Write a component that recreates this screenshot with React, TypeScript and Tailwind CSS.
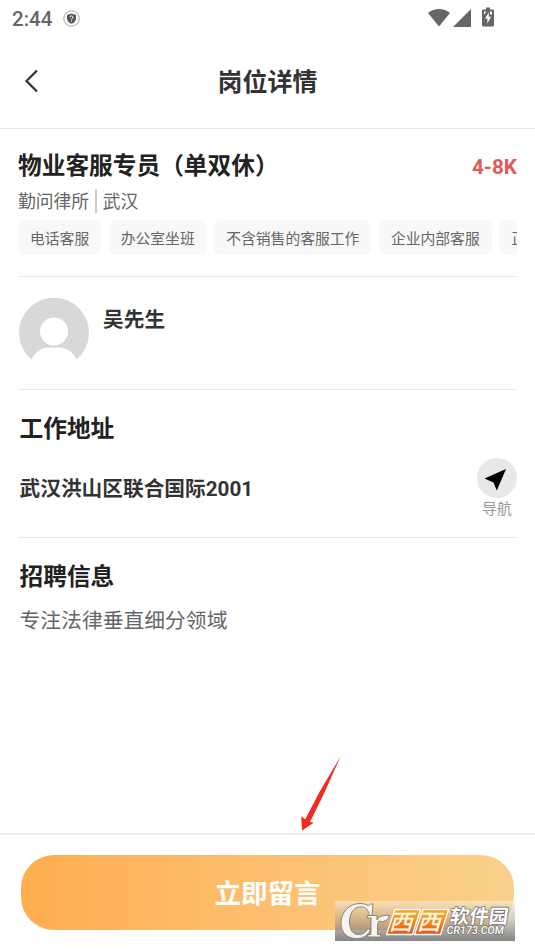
/**
 * JobDetailPage 组件
 * 岗位详情页 - 展示岗位信息、联系人、工作地址
 */

import React, { useState } from 'react';

const job = {
  title: '物业客服专员（单双休）',
  salary: '4-8K',
  company: '勤问律所',
  city: '武汉',
  tags: ['电话客服', '办公室坐班', '不含销售的客服工作', '企业内部客服', '正规公司'],
  contact: '吴先生',
  address: '武汉洪山区联合国际2001',
  description: '专注法律垂直细分领域',
};

// 系统状态栏
const StatusBar: React.FC = () => (
  <div className="flex h-[37px] items-center px-3 text-[#666]">
    <span className="pt-px text-[20.5px] font-medium leading-none">2:44</span>
    <svg className="ml-[11px] h-[17px] w-[17px]" viewBox="0 0 17 17" fill="none">
      <circle cx="8.5" cy="8.5" r="7.7" stroke="#888" strokeWidth="0.8" />
      <path d="M8.5 3.600 13 5v3.400c0 2.500-1.900 4.200-4.500 5.400C5.900 12.600 4 10.900 4 8.400V5z" fill="#555" />
      <path d="M7 7.300c0-2 3-2 3 0 0 1.100-1.500 1.100-1.500 2.500m0 .9v1" stroke="#fff" strokeWidth="1" />
    </svg>
    <svg className="ml-auto h-[19px] w-[22px]" viewBox="0 0 22 19" fill="currentColor">
      <path d="M0 4C6.200-1.200 15.800-1.200 22 4L11 17.500z" />
    </svg>
    <svg className="ml-[3px] h-[19px] w-[18px]" viewBox="0 0 18 19" fill="currentColor">
      <path d="M18 0v18H0z" />
    </svg>
    <svg className="mb-[3px] ml-[11px] mr-[29px] h-[20px] w-[12px]" viewBox="0 0 12 20" fill="currentColor">
      <path d="M4 .5h4v2h2.800c.7 0 1.200.5 1.200 1.200v14.600c0 .7-.5 1.200-1.200 1.200H1.200C.5 19.500 0 19 0 18.300V3.700c0-.7.5-1.200 1.200-1.200H4z" />
      <path d="M6.700 5.500 3 11.500h2.400v5L9 9.800H6.700z" fill="#fff" />
      <path d="M2 4.500h2.600L2 7.500zM10 4.500H7.800v3H10z" fill="#fff" />
    </svg>
  </div>
);

// 默认头像
const Avatar: React.FC = () => (
  <svg className="h-[70px] w-[70px] shrink-0" viewBox="0 0 70 70">
    <path d="M12.500 61.500A35 35 0 1 1 57.500 61.500C54 53.500 46.500 49.500 40 49.500H30C23.500 49.500 16 53.500 12.500 61.500Z" fill="#d8d8d8" />
    <circle cx="35" cy="33.500" r="14" fill="#fff" />
  </svg>
);

// 右下角站点水印
const SiteMark: React.FC = () => (
  <div className="absolute bottom-[10px] left-[335px] h-10 w-[180px] bg-linear-to-b from-[#fbeedb]/60 via-[#a89c8c]/55 to-[#777]/90">
    <svg className="block h-10 w-[180px]" viewBox="0 0 180 40">
      <defs>
        <linearGradient id="markOrange" x1="0" y1="0" x2="0" y2="1">
          <stop offset="0.200" stopColor="#f8a51b" />
          <stop offset="1" stopColor="#e3541d" />
        </linearGradient>
      </defs>
      <g fill="#f4f4f4" stroke="#8b7963" strokeWidth="0.900" strokeLinejoin="round">
        <path d="M38 3 37 14.500h-2.500C33.500 8.500 30 5.800 26 5.800 19 5.800 14.500 12 14.500 21c0 8 3.500 12.500 9 12.500 4.500 0 7.500-2.300 9.500-6l2.500 1.500C32.500 35 27.500 37.500 21.500 37.500 12 37.500 6 31.500 6 22 6 11 14.500 2.500 25 2.500c4 0 6.500 1 8.500 2.300L35.500 3z" />
        <path d="M32.500 14.500h9.500v4.500c2-3.500 5-5 12.500-4.500-1.500 5-6 7-10 5.500-1.500 1-2 2.500-2 5V33.500h3V36H33V33.500h3V17h-3.500z" />
      </g>
      <g fill="url(#markOrange)" stroke="#fff" strokeWidth="1.300" strokeLinejoin="round">
        <path d="M60 8.500h25.500l-8 25H51.500z" />
        <path d="M88 8.500h25.500l-8 25H79.500z" />
      </g>
      <g className="font-medium" fill="#fff8e8" fontSize="22" transform="skewX(-17)">
        <text x="62.500" y="29.500" textLength="24" lengthAdjust="spacingAndGlyphs">西</text>
        <text x="90.500" y="29.500" textLength="24" lengthAdjust="spacingAndGlyphs">西</text>
      </g>
      <g fill="#fff" stroke="#777" strokeLinejoin="round" paintOrder="stroke">
        <text className="font-bold" x="117.500" y="22.500" fontSize="19" strokeWidth="1.600" textLength="58" lengthAdjust="spacingAndGlyphs" transform="skewX(-8)">软件园</text>
        <text className="font-medium" x="116" y="33.500" fontSize="11" strokeWidth="1.600" textLength="57" lengthAdjust="spacingAndGlyphs" transform="skewX(-8)">CR173.COM</text>
      </g>
    </svg>
  </div>
);

const App: React.FC = () => {
  const [sent, setSent] = useState(false);

  return (
    <div className="relative flex h-[951px] w-[535px] flex-col overflow-hidden bg-white font-[Roboto,'Noto_Sans_CJK_SC',sans-serif] text-[#333]">
      <StatusBar />

      {/* Header */}
      <header className="grid h-[92px] grid-cols-[1fr_auto_1fr] items-center border-b border-[#e9e9e9] pb-[3px]">
        <button className="ml-6 w-4" aria-label="返回">
          <svg className="h-6 w-4" viewBox="0 0 16 24" fill="none" stroke="#333" strokeWidth="2.200">
            <path d="M13 1.500 2.500 12 13 22.500" />
          </svg>
        </button>
        <h1 className="pt-[3px] text-[25px] font-bold leading-9">岗位详情</h1>
      </header>

      {/* Main Content */}
      <main className="flex-1 px-[18px]">
        <section className="h-[148px] border-b border-[#e9e9e9] pt-5">
          <div className="flex h-9 items-center justify-between">
            <h2 className="whitespace-nowrap text-[23.7px] font-bold text-[#222]">{job.title}</h2>
            <span className="pt-[2px] text-[20.7px] font-bold text-[#df5b5b]">{job.salary}</span>
          </div>
          <div className="flex h-[33px] items-center text-[17.8px] text-[#666]">
            <span className="pt-px">{job.company}</span>
            <span className="mx-[6px] mb-px h-6 w-[1.5px] bg-[#ccc]" />
            <span className="pt-px">{job.city}</span>
          </div>
          <div className="mt-[2px] flex gap-[7.5px] overflow-hidden">
            {job.tags.map((tag) => (
              <span
                key={tag}
                className="flex h-[35px] shrink-0 items-center rounded-[7px] bg-[#f8f8f8] px-3 pt-[3px] text-[14.8px] text-[#666]"
              >
                {tag}
              </span>
            ))}
          </div>
        </section>

        <section className="flex h-[113px] border-b border-[#e9e9e9] pl-px pt-[21px]">
          <Avatar />
          <p className="ml-[14px] mt-[6px] text-[20.7px] font-bold leading-8">{job.contact}</p>
        </section>

        <section className="h-[148px] border-b border-[#e9e9e9] pl-[1.5px] pt-[21px]">
          <h3 className="text-[23.7px] font-bold leading-9 text-[#222]">工作地址</h3>
          <div className="mt-[11px] flex justify-between">
            <p className="mt-[15px] text-[20.7px] font-bold leading-8">{job.address}</p>
            <button className="flex w-10 flex-col items-center">
              <span className="flex h-10 w-10 items-center justify-center rounded-full bg-[#e8e8e8]">
                <svg className="h-10 w-10" viewBox="0 0 40 40">
                  <path d="M29 11 19.800 32.500 16.500 24.500 7.500 20.500z" />
                </svg>
              </span>
              <span className="text-[14.8px] leading-[23px] text-[#999]">导航</span>
            </button>
          </div>
        </section>

        <section className="pl-[1.5px] pt-[21px]">
          <h3 className="text-[23.7px] font-bold leading-9 text-[#222]">招聘信息</h3>
          <p className="mt-[10px] text-[20.8px] leading-8 text-[#666]">{job.description}</p>
        </section>
      </main>

      {/* Footer */}
      <footer className="h-[118px] border-t-2 border-[#ececec] px-[21px] pt-5">
        <button
          onClick={() => setSent(true)}
          disabled={sent}
          className="h-[75px] w-[493px] rounded-[33px] bg-linear-to-r from-[#ffad4f] to-[#f9d18c] pt-[3px] text-[26.5px] font-bold text-white"
        >
          立即留言
        </button>
      </footer>

      {/* 指向按钮的红色箭头 */}
      <svg className="absolute left-[298px] top-[755px] h-[78px] w-[46px]" viewBox="0 0 46 78" fill="#f42a1e">
        <path d="M42.800 1 21.500 37 7.300 64.300 3.200 61.500 4 75.500 15.800 67.800 12 67 26 38.500z" />
      </svg>

      <SiteMark />
    </div>
  );
};

export default App;
